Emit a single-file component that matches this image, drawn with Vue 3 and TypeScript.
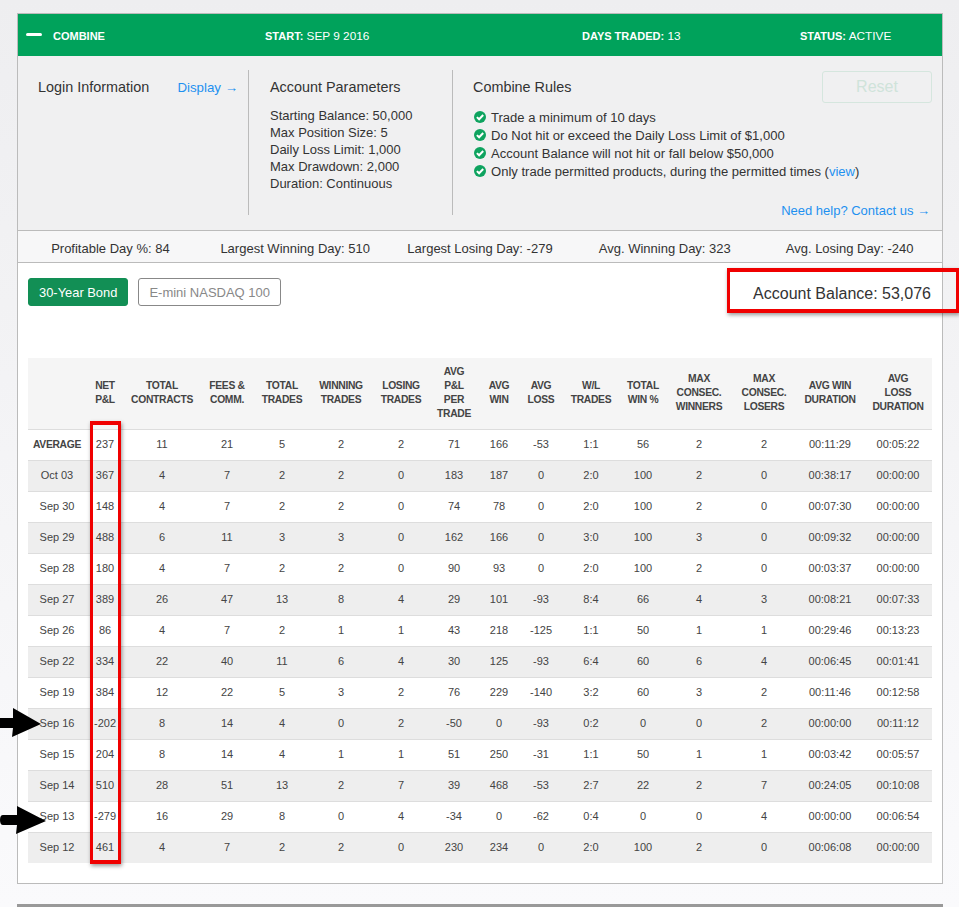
<script setup lang="ts">
// Column widths of the daily table, in px
const colWidths = [58, 38, 76, 54, 56, 62, 58, 48, 42, 42, 58, 46, 66, 64, 68, 68];

const headers = [
  '', 'NET\nP&L', 'TOTAL\nCONTRACTS', 'FEES &\nCOMM.', 'TOTAL\nTRADES', 'WINNING\nTRADES', 'LOSING\nTRADES',
  'AVG\nP&L\nPER\nTRADE', 'AVG\nWIN', 'AVG\nLOSS', 'W/L\nTRADES', 'TOTAL\nWIN %', 'MAX\nCONSEC.\nWINNERS',
  'MAX\nCONSEC.\nLOSERS', 'AVG WIN\nDURATION', 'AVG\nLOSS\nDURATION'
];

const rows = [
  ['AVERAGE', '237', '11', '21', '5', '2', '2', '71', '166', '-53', '1:1', '56', '2', '2', '00:11:29', '00:05:22'],
  ['Oct 03', '367', '4', '7', '2', '2', '0', '183', '187', '0', '2:0', '100', '2', '0', '00:38:17', '00:00:00'],
  ['Sep 30', '148', '4', '7', '2', '2', '0', '74', '78', '0', '2:0', '100', '2', '0', '00:07:30', '00:00:00'],
  ['Sep 29', '488', '6', '11', '3', '3', '0', '162', '166', '0', '3:0', '100', '3', '0', '00:09:32', '00:00:00'],
  ['Sep 28', '180', '4', '7', '2', '2', '0', '90', '93', '0', '2:0', '100', '2', '0', '00:03:37', '00:00:00'],
  ['Sep 27', '389', '26', '47', '13', '8', '4', '29', '101', '-93', '8:4', '66', '4', '3', '00:08:21', '00:07:33'],
  ['Sep 26', '86', '4', '7', '2', '1', '1', '43', '218', '-125', '1:1', '50', '1', '1', '00:29:46', '00:13:23'],
  ['Sep 22', '334', '22', '40', '11', '6', '4', '30', '125', '-93', '6:4', '60', '6', '4', '00:06:45', '00:01:41'],
  ['Sep 19', '384', '12', '22', '5', '3', '2', '76', '229', '-140', '3:2', '60', '3', '2', '00:11:46', '00:12:58'],
  ['Sep 16', '-202', '8', '14', '4', '0', '2', '-50', '0', '-93', '0:2', '0', '0', '2', '00:00:00', '00:11:12'],
  ['Sep 15', '204', '8', '14', '4', '1', '1', '51', '250', '-31', '1:1', '50', '1', '1', '00:03:42', '00:05:57'],
  ['Sep 14', '510', '28', '51', '13', '2', '7', '39', '468', '-53', '2:7', '22', '2', '7', '00:24:05', '00:10:08'],
  ['Sep 13', '-279', '16', '29', '8', '0', '4', '-34', '0', '-62', '0:4', '0', '0', '4', '00:00:00', '00:06:54'],
  ['Sep 12', '461', '4', '7', '2', '2', '0', '230', '234', '0', '2:0', '100', '2', '0', '00:06:08', '00:00:00']
];

const params = [
  'Starting Balance: 50,000',
  'Max Position Size: 5',
  'Daily Loss Limit: 1,000',
  'Max Drawdown: 2,000',
  'Duration: Continuous'
];

const rules = [
  'Trade a minimum of 10 days',
  'Do Not hit or exceed the Daily Loss Limit of $1,000',
  'Account Balance will not hit or fall below $50,000',
  'Only trade permitted products, during the permitted times'
];

const stats = [
  'Profitable Day %: 84',
  'Largest Winning Day: 510',
  'Largest Losing Day: -279',
  'Avg. Winning Day: 323',
  'Avg. Losing Day: -240'
];
</script>

<template>
  <div class="page">
    <section class="card">
      <header class="bar">
        <div class="bar-name"><span class="minus"></span><b>COMBINE</b></div>
        <div class="bar-start"><b>START:</b> SEP 9 2016</div>
        <div class="bar-days"><b>DAYS TRADED:</b> 13</div>
        <div class="bar-status"><b>STATUS:</b> ACTIVE</div>
      </header>

      <div class="info">
        <div class="login">
          <h3>Login Information</h3>
          <a class="display">Display →</a>
        </div>
        <div class="params">
          <h3>Account Parameters</h3>
          <p v-for="p in params" :key="p">{{ p }}</p>
        </div>
        <div class="rules">
          <div class="rules-top">
            <h3>Combine Rules</h3>
            <button class="reset">Reset</button>
          </div>
          <ul>
            <li v-for="(r, i) in rules" :key="r">
              <svg width="12" height="12" viewBox="0 0 12 12">
                <circle cx="6" cy="6" r="6" fill="#0ea35f" />
                <path d="M2.9 6.1l2.2 2.2L9.2 4" fill="none" stroke="#fff" stroke-width="2" />
              </svg>
              <span>{{ r }}<template v-if="i === 3"> (<a>view</a>)</template></span>
            </li>
          </ul>
          <a class="help">Need help? Contact us →</a>
        </div>
      </div>

      <div class="stats">
        <span v-for="s in stats" :key="s">{{ s }}</span>
      </div>

      <div class="body">
        <div class="toolbar">
          <div class="tabs">
            <button class="tab active">30-Year Bond</button>
            <button class="tab">E-mini NASDAQ 100</button>
          </div>
          <div class="balance">Account Balance: 53,076</div>
        </div>

        <table class="days">
          <colgroup>
            <col v-for="(w, i) in colWidths" :key="i" :style="{ width: w + 'px' }" />
          </colgroup>
          <thead>
            <tr>
              <th v-for="(h, i) in headers" :key="i">{{ h }}</th>
            </tr>
          </thead>
          <tbody>
            <tr v-for="(row, r) in rows" :key="r">
              <td v-for="(c, i) in row" :key="i" :class="{ avg: r === 0 && i === 0 }">{{ c }}</td>
            </tr>
          </tbody>
        </table>
      </div>
    </section>

    <div class="page-rule"></div>

    <!-- annotations drawn over the screenshot -->
    <div class="mark mark-balance"></div>
    <div class="mark mark-net"></div>
    <svg class="arrow arrow-1" width="42" height="30" viewBox="0 0 42 30">
      <path d="M0 10h13V0l28 16-29 13 1-9H0z" fill="#000" />
    </svg>
    <svg class="arrow arrow-2" width="47" height="29" viewBox="0 0 47 29">
      <path d="M3 9h14V0l29 15-30 13 1-9H3q-3 0-3-5t3-5z" fill="#000" />
    </svg>
  </div>
</template>

<style scoped>
.page {
  position: relative;
  height: 907px;
  overflow: hidden;
  padding: 13px 16px 0 17px;
  box-sizing: border-box;
  background: linear-gradient(#eeeef0, #fafafc);
  font-family: "Liberation Sans", Arial, sans-serif;
  color: #333;
}

.card {
  border: 1px solid #bbb;
  background: #fff;
  height: 871px;
  box-sizing: border-box;
}

.bar {
  display: grid;
  grid-template-columns: 247px 317px 218px 1fr;
  align-items: center;
  height: 42px;
  box-sizing: border-box;
  padding-top: 2px;
  background: #00a25b;
  color: #fff;
  font-size: 11.8px;
}

.bar b {
  font-size: 11px;
  font-weight: bold;
}

.bar-name {
  display: flex;
  align-items: center;
  gap: 11px;
  padding-left: 8px;
}

.minus {
  width: 16px;
  height: 3px;
  margin-top: -4px;
  border-radius: 2px;
  background: #fff;
}

.info {
  display: flex;
  height: 175px;
  box-sizing: border-box;
  padding-top: 14px;
  background: #f0f0f1;
  border-bottom: 1px solid #bbb;
}

h3 {
  margin: 0;
  font-size: 14.4px;
  font-weight: normal;
  line-height: 18px;
  color: #333;
}

a {
  color: #1e90f0;
}

.login {
  display: flex;
  justify-content: space-between;
  width: 231px;
  height: 145px;
  box-sizing: border-box;
  padding: 8px 10px 0 20px;
  border-right: 1px solid #bbb;
}

.display {
  font-size: 13.3px;
  line-height: 20px;
}

.params {
  width: 204px;
  height: 145px;
  box-sizing: border-box;
  padding: 8px 0 0 21px;
  border-right: 1px solid #bbb;
}

.params h3 {
  margin-bottom: 11px;
}

.params p {
  margin: 0;
  font-size: 13px;
  line-height: 17px;
}

.rules {
  flex: 1;
  position: relative;
  padding: 0 10px 0 20px;
}

.rules-top {
  display: flex;
  justify-content: space-between;
  align-items: flex-start;
  height: 33px;
  padding-top: 1px;
}

.rules-top h3 {
  margin-top: 7px;
}

.reset {
  width: 110px;
  height: 32px;
  border: 1px solid #d5e6de;
  border-radius: 3px;
  background: transparent;
  color: #cfe3da;
  font: 16px "Liberation Sans", Arial, sans-serif;
}

.rules ul {
  list-style: none;
  margin: 4px 0 0 1px;
  padding: 0;
}

.rules li {
  display: flex;
  align-items: center;
  gap: 5px;
  height: 18px;
  font-size: 13.05px;
}

.help {
  position: absolute;
  right: 12px;
  top: 133px;
  font-size: 13px;
}

.stats {
  display: grid;
  grid-template-columns: repeat(5, 1fr);
  justify-items: center;
  align-items: center;
  height: 32px;
  box-sizing: border-box;
  padding-top: 4px;
  background: #f7f7f8;
  border-bottom: 1px solid #bbb;
  font-size: 13px;
}

.body {
  padding: 15px 10px 0;
}

.toolbar {
  display: flex;
  justify-content: space-between;
  height: 80px;
}

.tabs {
  display: flex;
  gap: 10px;
  align-items: flex-start;
}

.tab {
  height: 28px;
  padding: 0 10px;
  border: 1px solid #888;
  border-radius: 3px;
  background: #fff;
  color: #888;
  font: 13px "Liberation Sans", Arial, sans-serif;
}

.tab.active {
  border-color: #128f55;
  background: #128f55;
  color: #fff;
  font-size: 12.9px;
}

.balance {
  margin-top: 6px;
  padding-right: 1px;
  font-size: 16px;
  line-height: 20px;
  color: #333;
}

.days {
  table-layout: fixed;
  width: 904px;
  border-collapse: collapse;
  font-size: 11px;
  color: #444;
}

.days th {
  height: 71px;
  box-sizing: border-box;
  padding: 0;
  background: #f5f5f5;
  border-bottom: 1px solid #ddd;
  font-size: 10.3px;
  letter-spacing: -0.3px;
  line-height: 14px;
  font-weight: bold;
  color: #444;
  white-space: pre-line;
}

.days td {
  height: 31px;
  padding: 0 0 1px;
  box-sizing: border-box;
  text-align: center;
  border-bottom: 1px solid #ddd;
}

.days tbody tr:nth-child(even) td {
  background: #eee;
}

.days tbody tr:last-child td {
  border-bottom: 0;
}

.days td.avg {
  font-size: 10.3px;
  letter-spacing: -0.3px;
  font-weight: bold;
}

.page-rule {
  height: 3px;
  margin-top: 20px;
  background: #999;
}

.mark {
  position: absolute;
  box-sizing: border-box;
  border-style: solid;
  border-color: #f00000;
  border-width: 4px 3px;
  box-shadow: 1px 2px 4px rgba(0, 0, 0, 0.4);
}

.mark-balance {
  left: 727px;
  top: 268px;
  width: 232px;
  height: 45px;
}

.mark-net {
  left: 90px;
  top: 421px;
  width: 31px;
  height: 443px;
}

.arrow {
  position: absolute;
  left: 0;
}

.arrow-1 {
  top: 708px;
}

.arrow-2 {
  top: 806px;
}
</style>

<style>
html,
body {
  margin: 0;
  background: #f5f5f7;
}
</style>
